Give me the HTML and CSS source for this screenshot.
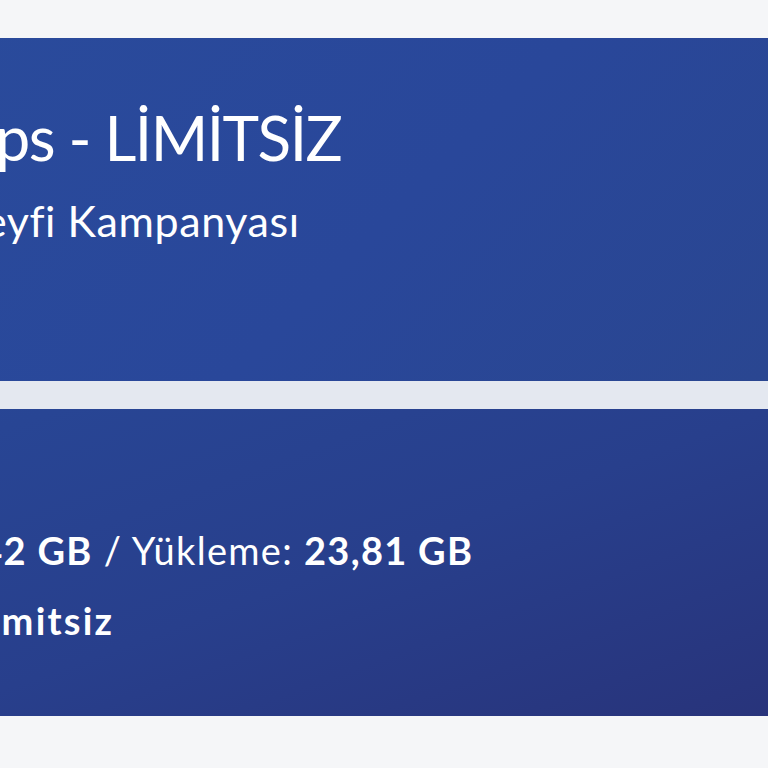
FILE: index.html
```html
<!DOCTYPE html>
<html lang="tr">

<head>
    <title>Paketim</title>
    <link rel="stylesheet" href="styles.css">
</head>

<body>
    <section class="packages">
        <div class="card card-plan">
            <h1 class="plan-title">100 Mbps - LİMİTSİZ</h1>
            <p class="plan-sub">İnternet Keyfi Kampanyası</p>
        </div>
        <div class="card card-usage">
            <p class="usage-line">İndirme: <b>123,42 GB</b> / Yükleme: <b>23,81 GB</b></p>
            <p class="usage-line quota">Kalan Kota: <b>Limitsiz</b></p>
        </div>
    </section>
</body>

</html>
```

FILE: styles.css
```css
body {
    margin: 0;
    background-color: #f5f6f8;
    font-family: "Lato", "Noto Sans", sans-serif;
    color: white;
    overflow: hidden;
}

.packages {
    display: flex;
    flex-direction: column;
    gap: 28px;
    margin: 38px 0 0 -300px;
    width: calc(100% + 340px);
    background-color: #e4e8f0;
}

.card-plan {
    height: 343px;
    padding-left: 89px;
    background: linear-gradient(135deg, #2a4c9c 0%, #29479a 60%, #2a4690 100%);
}

.card-usage {
    height: 307px;
    padding-left: 42px;
    background: linear-gradient(160deg, #284898 0%, #283f8c 55%, #28337a 100%);
}

.plan-title {
    margin: 0;
    padding-top: 62px;
    font-size: 62px;
    font-weight: 400;
    letter-spacing: -1.5px;
}

.plan-sub {
    margin: 21px 0 0;
    font-size: 43px;
    letter-spacing: 0.6px;
}

.usage-line {
    margin: 0;
    font-size: 38px;
    letter-spacing: 1.3px;
}

.usage-line:first-child {
    padding-top: 118px;
}

.usage-line + .usage-line {
    margin-top: 24px;
}

.usage-line b {
    font-weight: 700;
}

.quota {
    letter-spacing: 2.2px;
}
```
